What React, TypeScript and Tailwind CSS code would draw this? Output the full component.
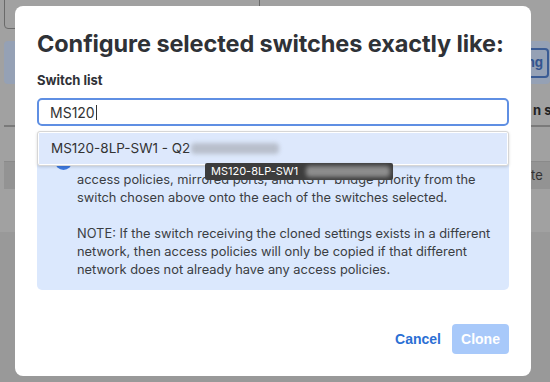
import React from "react"

const body = { fontFamily: "Inter, 'Noto Sans', sans-serif" }
const heading = { fontFamily: "Inter, 'Open Sans', sans-serif" }
const arial = { fontFamily: "'Liberation Sans', Arial, sans-serif" }

function Blur({ w, className = "" }: { w: number; className?: string }) {
  return (
    <span
      className={`inline-block h-[11px] align-middle blur-[2px] rounded-sm ${className}`}
      style={{ width: w }}
    />
  )
}

export default function App() {
  return (
    <div className="relative w-[550px] h-[382px] overflow-hidden bg-[#999999]" style={body}>
      {/* dimmed page behind the dialog */}
      <div className="h-[232px] bg-[#a1a1a1] flex flex-col">
        <div className="ml-[4px] mt-[-8px] w-[256px] h-[37px] border border-[#6a6a6a] rounded" />
        <div className="ml-[4px] mt-[12px] h-[43px] bg-[#95a1b5] rounded flex justify-end items-center">
          <div className="mr-[1px] pl-3 pr-[4px] h-[30px] border-2 border-[#3a5b94] rounded text-[13px] font-bold text-[#33558f] flex items-center">
            Saving
          </div>
        </div>
        <div className="mt-[18px] ml-[533px] text-[13px] leading-[16px] font-bold text-[#222] whitespace-nowrap">
          n status
        </div>
        <div className="ml-[4px] mt-[7px] h-[2px] bg-[#7a7a7a]" />
        <div className="ml-[4px] mt-[34px] h-[28px] bg-[#939393] border-t border-[#8a8a8a] flex items-center">
          <span className="ml-[527px] text-[13px] text-[#333] whitespace-nowrap">te</span>
        </div>
      </div>

      {/* dialog */}
      <div className="absolute left-[15px] top-[6px] w-[516px] h-[370px] bg-white rounded-lg px-[22px] pt-[23px] pb-[22px] flex flex-col">
        <h1 className="text-[23.5px] leading-[29px] font-bold text-[#2f3237] tracking-[-0.1px] whitespace-nowrap" style={heading}>
          Configure selected switches exactly like:
        </h1>

        <label className="mt-[14px] text-[13px] leading-[16px] font-bold text-[#2f3237]">Switch list</label>

        <div className="relative mt-[10px]">
          <div className="h-[28px] border-2 border-[#5f8fe3] rounded-[5px] flex items-center pl-[11px] text-[14px] text-[#333]">
            MS120<span className="w-px h-[15px] bg-[#333] ml-px" />
          </div>

          {/* dropdown */}
          <div className="absolute z-10 left-0 right-0 top-[33px] h-[35px] bg-white border border-[#d6d6d6] rounded-[3px] shadow-[0_1px_3px_rgba(0,0,0,0.15)] p-[1px]">
            <div className="h-full bg-[#dde8fc] flex items-center pl-[12px] text-[13.5px] text-[#333] whitespace-nowrap">
              MS120-8LP-SW1 - Q2
              <Blur w={88} className="bg-[#b8bfcc] ml-[1px]" />
            </div>
          </div>

          {/* tooltip */}
          <div className="absolute z-20 left-[168px] top-[65px] w-[188px] h-[17px] bg-[#3d3d3d] rounded-[2px] flex items-center pl-[6px] text-[11px] text-white whitespace-nowrap">
            MS120-8LP-SW1
            <Blur w={84} className="bg-[#8d8d8d] ml-[8px]" />
          </div>

          {/* info box */}
          <div className="mt-[16px] bg-[#dbe8fd] rounded-[5px] pl-[18px] pr-[14px] pt-[10px] pb-[11px] flex gap-[5px]">
            <div className="w-[17px] h-[17px] rounded-full bg-[#3e7ae0] shrink-0 mt-[1px]" />
            <div className="text-[12.85px] leading-[18px] text-[#3a3d42] whitespace-nowrap">
              <div className="leading-[14px] mb-[5px]">This will clone the switch settings, such as VLANs, ACL rules,</div>
              <div>access policies, mirrored ports, and RSTP bridge priority from the</div>
              <div>switch chosen above onto the each of the switches selected.</div>
              <div className="h-[18px]" />
              <div>NOTE: If the switch receiving the cloned settings exists in a different</div>
              <div>network, then access policies will only be copied if that different</div>
              <div>network does not already have any access policies.</div>
            </div>
          </div>
        </div>

        <div className="mt-auto flex justify-end items-center gap-[11px]" style={arial}>
          <button className="text-[14px] font-bold text-[#2b6fd4]">Cancel</button>
          <button className="w-[57px] h-[30px] rounded-[4px] bg-[#a8c9fa] text-[14px] font-bold text-white">Clone</button>
        </div>
      </div>
    </div>
  )
}
